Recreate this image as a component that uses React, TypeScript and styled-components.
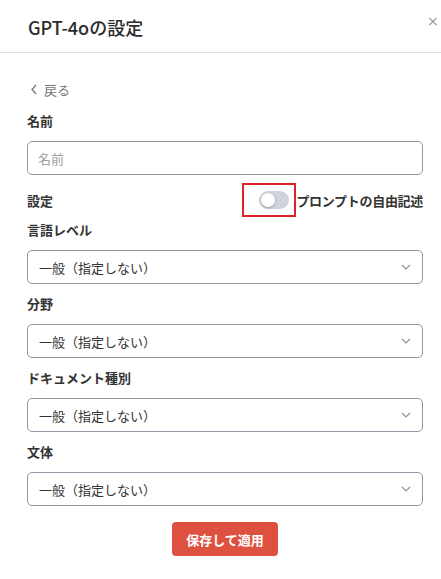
import styled, { createGlobalStyle } from 'styled-components';

const GlobalStyle = createGlobalStyle`
  html, body {
    margin: 0;
    padding: 0;
    background: #ffffff;
  }
  body {
    font-family: "Noto Sans CJK JP", "Noto Sans", sans-serif;
    color: #333333;
  }
`;

const selectFields = ['言語レベル', '分野', 'ドキュメント種別', '文体'];

export default function App() {
  return (
    <>
      <GlobalStyle />
      <Modal>
        <Header>
          <Title>GPT-4oの設定</Title>
          <Close aria-label="close">×</Close>
        </Header>
        <Body>
          <BackLink>
            <svg width="8" height="11" viewBox="0 0 8 11">
              <polyline points="6,1 2,5.5 6,10" fill="none" stroke="#777" strokeWidth="1.3" />
            </svg>
            戻る
          </BackLink>
          <Label>名前</Label>
          <TextInput placeholder="名前" />
          <SettingRow>
            <RowLabel>設定</RowLabel>
            <ToggleWrap>
              <Highlight>
                <Track>
                  <Thumb />
                </Track>
              </Highlight>
              <ToggleText>プロンプトの自由記述</ToggleText>
            </ToggleWrap>
          </SettingRow>
          {selectFields.map((name, i) => (
            <Field key={name} $first={i === 0}>
              <Label>{name}</Label>
              <Select>
                <span>一般（指定しない）</span>
                <svg width="10" height="6" viewBox="0 0 10 6">
                  <polyline points="1,1 5,5 9,1" fill="none" stroke="#8a949e" strokeWidth="1.2" />
                </svg>
              </Select>
            </Field>
          ))}
          <Footer>
            <SaveButton>保存して適用</SaveButton>
          </Footer>
        </Body>
      </Modal>
    </>
  );
}

const Modal = styled.div`
  width: 441px;
  height: 579px;
  background: #fff;
`;

const Header = styled.div`
  display: flex;
  justify-content: space-between;
  align-items: center;
  height: 52px;
  padding: 0 4px 0 28px;
  border-bottom: 1px solid #e2e2e2;
`;

const Title = styled.h1`
  margin: 0;
  padding-top: 1px;
  font-size: 18px;
  font-weight: 500;
  color: #2b2b2b;
`;

const Close = styled.button`
  align-self: flex-start;
  margin-top: 13px;
  border: none;
  background: none;
  padding: 0;
  width: 10px;
  font-size: 14px;
  line-height: 16px;
  color: #999;
  font-family: "DejaVu Sans", sans-serif;
`;

const Body = styled.div`
  padding: 26px 18px 0 27px;
`;

const BackLink = styled.div`
  display: flex;
  align-items: center;
  gap: 6px;
  height: 20px;
  padding-left: 3px;
  font-size: 13px;
  color: #777;
  margin-bottom: 12px;
`;

const Label = styled.div`
  font-size: 13px;
  font-weight: 700;
  line-height: 20px;
  color: #333;
  margin-bottom: 10px;
`;

const TextInput = styled.input`
  box-sizing: border-box;
  display: block;
  width: 396px;
  height: 34px;
  padding: 0 10px;
  border: 1px solid #8e99a4;
  border-radius: 5px;
  font-family: inherit;
  font-size: 13px;
  color: #333;
  outline: none;
  &::placeholder {
    color: #a0a0a0;
  }
`;

const SettingRow = styled.div`
  display: flex;
  align-items: center;
  justify-content: space-between;
  margin-top: 8px;
  height: 34px;
`;

const RowLabel = styled.div`
  font-size: 13px;
  font-weight: 700;
  color: #333;
`;

const ToggleWrap = styled.div`
  display: flex;
  align-items: center;
`;

const Highlight = styled.div`
  box-sizing: border-box;
  width: 54px;
  height: 34px;
  border: 2px solid #e3202a;
  padding: 6px 5px 6px 15px;
`;

const Track = styled.div`
  position: relative;
  width: 30px;
  height: 18px;
  border-radius: 9px;
  background: #cfd4da;
`;

const Thumb = styled.div`
  position: absolute;
  left: 2px;
  top: 2px;
  width: 14px;
  height: 14px;
  border-radius: 50%;
  background: #fff;
  box-shadow: 0 1px 3px rgba(0, 0, 0, 0.25);
`;

const ToggleText = styled.div`
  font-size: 13px;
  font-weight: 700;
  color: #333;
  letter-spacing: -0.3px;
`;

const Field = styled.div<{ $first?: boolean }>`
  margin-top: ${(p) => (p.$first ? '3px' : '10px')};
`;

const Select = styled.div`
  box-sizing: border-box;
  display: flex;
  align-items: center;
  justify-content: space-between;
  width: 396px;
  height: 34px;
  padding: 0 11px 0 11px;
  border: 1px solid #8e99a4;
  border-radius: 5px;
  font-size: 13px;
  color: #333;
`;

const Footer = styled.div`
  display: flex;
  justify-content: center;
  margin-top: 16px;
`;

const SaveButton = styled.button`
  width: 106px;
  height: 34px;
  border: none;
  border-radius: 4px;
  background: #dd5140;
  color: #fff;
  font-family: inherit;
  font-size: 13px;
  font-weight: 700;
`;
